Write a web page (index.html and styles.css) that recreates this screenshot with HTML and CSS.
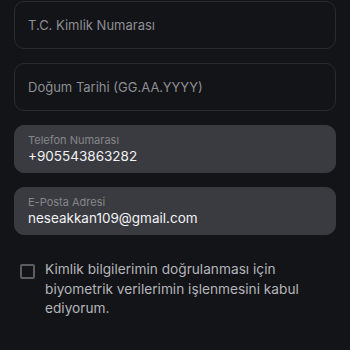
FILE: index.html
```html
<!DOCTYPE html>
<html lang="tr">
<head>
    <meta charset="UTF-8">
    <meta name="viewport" content="width=device-width, initial-scale=1.0">
    <title>Kimlik Doğrulama</title>
    <link rel="stylesheet" href="styles.css">
</head>
<body>
    <div class="form">
        <div class="field">
            <span class="placeholder">T.C. Kimlik Numarası</span>
        </div>
        <div class="field">
            <span class="placeholder">Doğum Tarihi (GG.AA.YYYY)</span>
        </div>
        <div class="field filled">
            <span class="label">Telefon Numarası</span>
            <span class="value">+905543863282</span>
        </div>
        <div class="field filled">
            <span class="label">E-Posta Adresi</span>
            <span class="value">neseakkan109@gmail.com</span>
        </div>
        <div class="consent">
            <span class="checkbox"></span>
            <p>Kimlik bilgilerimin doğrulanması için biyometrik verilerimin işlenmesini kabul ediyorum.</p>
        </div>
    </div>
</body>
</html>
```

FILE: styles.css
```css
body {
    margin: 0;
    background-color: #131418;
    font-family: Inter, "Noto Sans", sans-serif;
    height: 100vh;
}
.form {
    padding: 1px 14px 0;
    display: flex;
    flex-direction: column;
    gap: 14px;
}
.field {
    height: 48px;
    box-sizing: border-box;
    border: 1px solid #2a2b30;
    border-radius: 10px;
    padding: 0 13px;
    display: flex;
    flex-direction: column;
    justify-content: center;
}
.placeholder {
    font-size: 13px;
    color: #8d8e93;
}
.field.filled {
    background-color: #3a3b40;
    border-color: #3a3b40;
}
.label {
    font-size: 11px;
    color: #85868b;
    line-height: 14px;
}
.value {
    font-size: 13.5px;
    color: #f2f2f4;
    line-height: 18px;
}
.consent {
    display: flex;
    align-items: flex-start;
    margin-top: 12px;
    padding-left: 6px;
}
.checkbox {
    width: 15px;
    height: 15px;
    box-sizing: border-box;
    border: 2px solid #5c5d62;
    border-radius: 2px;
    margin-top: 3px;
    flex-shrink: 0;
}
.consent p {
    margin: -1px 0 0 10px;
    font-size: 13.7px;
    line-height: 19.5px;
    color: #b3b4b8;
}
```
